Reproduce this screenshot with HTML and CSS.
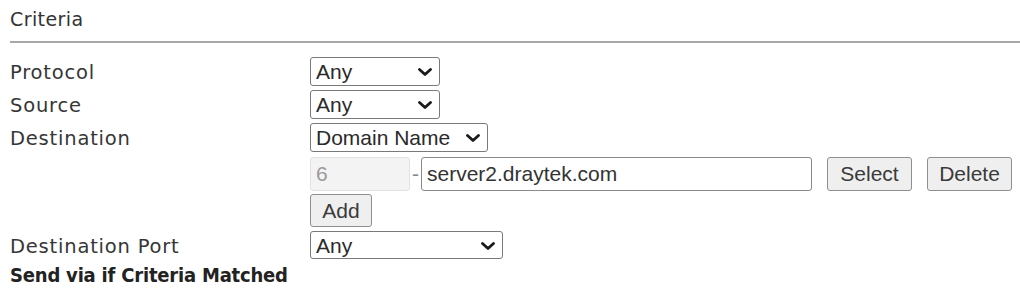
FILE: index.html
```html
<!DOCTYPE html>
<html>
<head>
<meta charset="utf-8">
<link rel="stylesheet" href="styles.css">
</head>
<body>
<div class="page">
  <div class="title">Criteria</div>
  <hr class="rule">
  <div class="form">
    <div class="lbl">Protocol</div>
    <div class="ctl">
      <span class="selwrap w130"><select class="sel"><option>Any</option></select><svg class="chev" viewBox="0 0 14 8"><path d="M1.5 1.5 L7 6.5 L12.5 1.5" fill="none" stroke="#1a1a1a" stroke-width="2.8" stroke-linecap="round" stroke-linejoin="round"/></svg></span>
    </div>
    <div class="lbl">Source</div>
    <div class="ctl">
      <span class="selwrap w130"><select class="sel"><option>Any</option></select><svg class="chev" viewBox="0 0 14 8"><path d="M1.5 1.5 L7 6.5 L12.5 1.5" fill="none" stroke="#1a1a1a" stroke-width="2.8" stroke-linecap="round" stroke-linejoin="round"/></svg></span>
    </div>
    <div class="lbl">Destination</div>
    <div class="ctl">
      <span class="selwrap w178"><select class="sel"><option>Domain Name</option></select><svg class="chev" viewBox="0 0 14 8"><path d="M1.5 1.5 L7 6.5 L12.5 1.5" fill="none" stroke="#1a1a1a" stroke-width="2.8" stroke-linecap="round" stroke-linejoin="round"/></svg></span>
    </div>
    <div class="lbl"></div>
    <div class="ctl domrow">
      <input class="inp idx" type="text" value="6" disabled>
      <span class="dash">-</span>
      <input class="inp dom" type="text" value="server2.draytek.com">
      <button class="btn bsel">Select</button>
      <button class="btn bdel">Delete</button>
    </div>
    <div class="lbl"></div>
    <div class="ctl">
      <button class="btn badd">Add</button>
    </div>
    <div class="lbl">Destination Port</div>
    <div class="ctl">
      <span class="selwrap w193"><select class="sel port"><option>Any</option></select><svg class="chev" viewBox="0 0 14 8"><path d="M1.5 1.5 L7 6.5 L12.5 1.5" fill="none" stroke="#1a1a1a" stroke-width="2.8" stroke-linecap="round" stroke-linejoin="round"/></svg></span>
    </div>
  </div>
  <div class="send">Send via if Criteria Matched</div>
</div>
</body>
</html>
```

FILE: styles.css
```css
html, body {
  margin: 0;
  padding: 0;
  background: #ffffff;
}
.page {
  padding: 7px 0 0 10px;
  font-family: "DejaVu Sans", Verdana, sans-serif;
  color: #3a3a3a;
}
.title {
  font-size: 19px;
  line-height: 24px;
  letter-spacing: 0.4px;
  color: #333;
}
.rule {
  margin: 10px 0 0 0;
  border: 0;
  height: 2px;
  background: #a8a8a8;
}
.form {
  margin-top: 14px;
  display: grid;
  grid-template-columns: 300px 1fr;
  row-gap: 4px;
  align-items: baseline;
}
.lbl {
  font-size: 19.5px;
  line-height: 24px;
  letter-spacing: 0.8px;
  color: #363636;
}
.ctl {
  display: flex;
  align-items: baseline;
}
.selwrap {
  position: relative;
  display: inline-block;
}
.sel {
  appearance: none;
  -webkit-appearance: none;
  box-sizing: border-box;
  height: 29px;
  width: 100%;
  margin: 0;
  padding: 0 24px 0 5px;
  font-family: "Liberation Sans", Arial, sans-serif;
  font-size: 21px;
  color: #2a2a2a;
  background: #fff;
  border: 1px solid #7a7a7a;
  border-radius: 3px;
}
.sel.port { height: 28px; }
.w130 { width: 130px; }
.w178 { width: 178px; }
.w193 { width: 193px; }
.chev {
  position: absolute;
  right: 8px;
  top: 11px;
  width: 14px;
  height: 8px;
  pointer-events: none;
}
.domrow {
  align-items: center;
  margin-top: 1px;
}
.inp {
  box-sizing: border-box;
  height: 34px;
  margin: 0;
  padding: 0 5px;
  font-family: "Liberation Sans", Arial, sans-serif;
  font-size: 21px;
  border-radius: 3px;
}
.idx {
  width: 100px;
  color: #9a9a9a;
  background: #f3f3f3;
  border: 1px solid #e2e2e2;
}
.dash {
  margin: 0 2px 0 2px;
  font-family: "Liberation Sans", Arial, sans-serif;
  font-size: 21px;
  color: #888;
}
.dom {
  width: 391px;
  color: #333;
  background: #fff;
  border: 1px solid #8a8a8a;
}
.btn {
  box-sizing: border-box;
  height: 34px;
  margin: 0;
  padding: 0;
  font-family: "Liberation Sans", Arial, sans-serif;
  font-size: 21px;
  color: #3a3a3a;
  background: #efefef;
  border: 1px solid #8f8f8f;
  border-radius: 3px;
}
.bsel { width: 85px; margin-left: 15px; }
.bdel { width: 85px; margin-left: 15px; }
.badd { width: 62px; height: 33px; margin-top: -1px; }
.send {
  margin-top: 4px;
  font-family: "DejaVu Sans Condensed", "DejaVu Sans", sans-serif;
  font-stretch: condensed;
  font-weight: bold;
  font-size: 20px;
  line-height: 24px;
  letter-spacing: -0.2px;
  color: #222;
}
```
